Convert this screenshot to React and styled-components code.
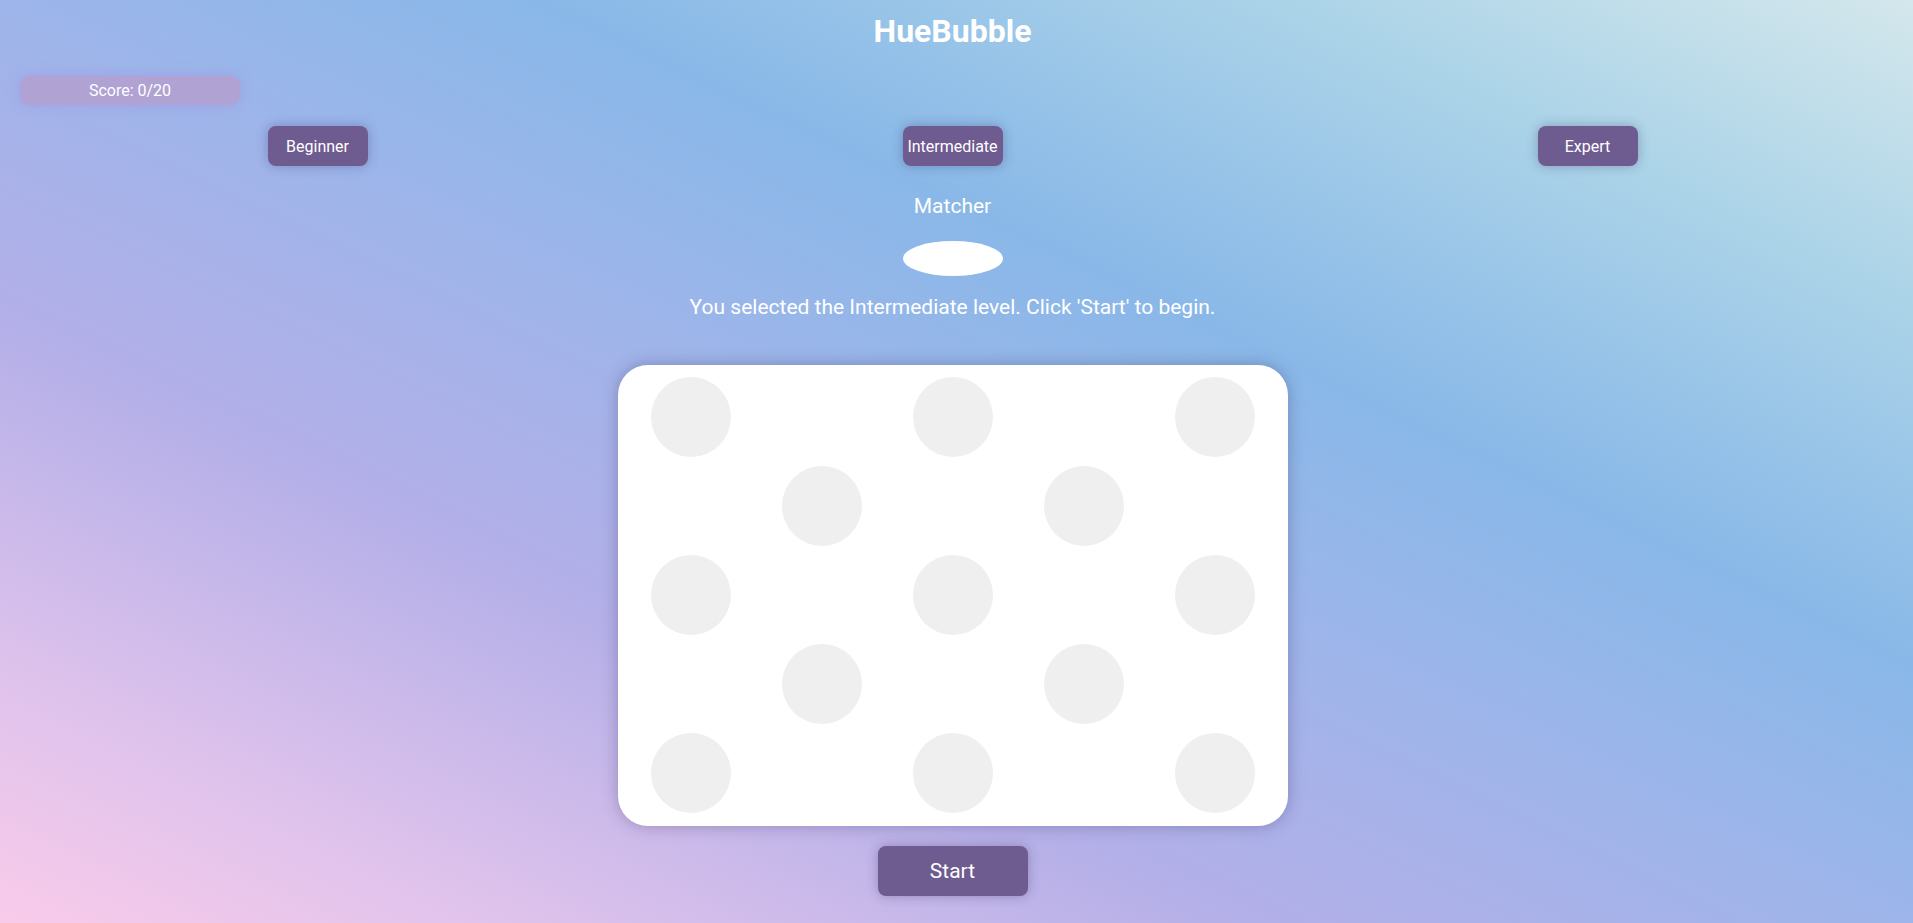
import React from 'react';
import styled, { createGlobalStyle } from 'styled-components';

const GlobalStyle = createGlobalStyle`
  html, body {
    margin: 0;
    padding: 0;
  }
  body {
    font-family: Roboto, 'Liberation Sans', sans-serif;
  }
`;

const Page = styled.div`
  box-sizing: border-box;
  min-height: 100vh;
  padding: 12px 8px 0 0;
  color: #ffffff;
  background: linear-gradient(
    to top right,
    #f9cbea 0%,
    #e0c3ec 13%,
    #b3afe8 33%,
    #9db5ea 50%,
    #89b8e8 64%,
    #98c4e8 73%,
    #acd4e8 84%,
    #d4e7ec 100%
  );
`;

const Title = styled.h1`
  margin: 0;
  text-align: center;
  font-size: 32px;
  line-height: 38px;
  font-weight: 700;
`;

const ScoreBox = styled.div`
  margin: 26px 0 0 20px;
  width: 220px;
  height: 29px;
  border-radius: 10px;
  background: #b0a2d3;
  box-shadow: 0 0 12px rgba(160, 150, 230, 0.7);
  display: flex;
  align-items: center;
  justify-content: center;
  font-size: 16px;
`;

const LevelRow = styled.div`
  margin-top: 21px;
  display: flex;
  justify-content: space-around;
`;

const Button = styled.button`
  width: ${p => (p.$wide ? '150px' : '100px')};
  height: ${p => (p.$wide ? '50px' : '40px')};
  padding: 0;
  border: none;
  border-radius: 8px;
  background: #6e5b8f;
  color: #ffffff;
  font-family: inherit;
  font-size: ${p => (p.$wide ? '21px' : '16px')};
  box-shadow: 0 0 12px rgba(40, 30, 80, 0.3);
  cursor: pointer;
`;

const Center = styled.div`
  display: flex;
  flex-direction: column;
  align-items: center;
`;

const Label = styled.div`
  margin-top: 28px;
  font-size: 21px;
  line-height: 25px;
`;

const Swatch = styled.div`
  margin-top: 22px;
  width: 100px;
  height: 35px;
  border-radius: 50%;
  background: #ffffff;
`;

const Message = styled.p`
  margin: 19px 0 0;
  font-size: 21px;
  line-height: 25px;
`;

const Board = styled.div`
  box-sizing: border-box;
  margin-top: 45px;
  width: 670px;
  height: 461px;
  padding: 12px 33px;
  border-radius: 30px;
  background: #ffffff;
  box-shadow: 0 0 16px rgba(60, 50, 100, 0.35);
  display: grid;
  grid-template-columns: repeat(5, 80px);
  grid-template-rows: repeat(5, 80px);
  column-gap: 51px;
  row-gap: 9px;
`;

const Bubble = styled.div`
  grid-column: ${p => p.$col + 1};
  grid-row: ${p => p.$row + 1};
  width: 80px;
  height: 80px;
  border-radius: 50%;
  background: #efefef;
`;

const StartWrap = styled.div`
  margin-top: 20px;
`;

const levels = ['Beginner', 'Intermediate', 'Expert'];

// checkerboard of bubbles: 3 on even rows, 2 on odd rows
const cells = [];
for (let r = 0; r < 5; r += 1) {
  for (let c = 0; c < 5; c += 1) {
    if ((r + c) % 2 === 0) cells.push({ r, c });
  }
}

const App = () => (
  <>
    <GlobalStyle />
    <Page>
      <Title>HueBubble</Title>
      <ScoreBox>Score: 0/20</ScoreBox>
      <LevelRow>
        {levels.map(level => (
          <Button key={level}>{level}</Button>
        ))}
      </LevelRow>
      <Center>
        <Label>Matcher</Label>
        <Swatch />
        <Message>You selected the Intermediate level. Click 'Start' to begin.</Message>
        <Board>
          {cells.map(({ r, c }) => (
            <Bubble key={`${r}-${c}`} $row={r} $col={c} />
          ))}
        </Board>
        <StartWrap>
          <Button $wide>Start</Button>
        </StartWrap>
      </Center>
    </Page>
  </>
);

export default App;
